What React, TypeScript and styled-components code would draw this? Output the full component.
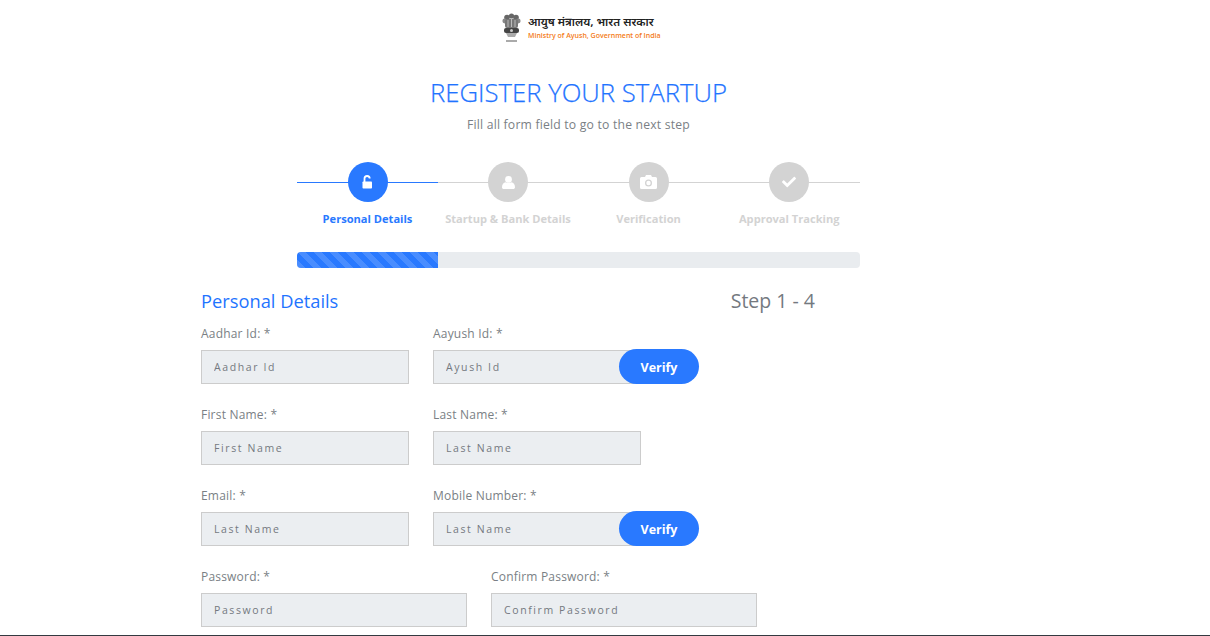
import React from "react";
import styled, { createGlobalStyle } from "styled-components";
import { FaCheck } from "react-icons/fa";

const Global = createGlobalStyle`
  html, body { margin: 0; padding: 0; background: #fff; height: 636px; overflow: hidden; }
  body { font-family: "Open Sans", "Noto Sans", sans-serif; }
  * { box-sizing: border-box; }
`;

const Page = styled.div`
  height: 636px;
  overflow: hidden;
  border-bottom: 1px solid #343a40;
  display: flex;
  flex-direction: column;
`;

const Brand = styled.header`
  height: 48px;
  padding: 13px 0 0 502px;
  display: flex;
  gap: 7px;
`;

const BrandText = styled.div`
  display: flex;
  flex-direction: column;
  padding-top: 4px;
`;

const BrandHindi = styled.span`
  font-family: "Noto Sans Devanagari", "Noto Sans", sans-serif;
  font-size: 11.5px;
  line-height: 14px;
  font-weight: 600;
  color: #222;
  white-space: nowrap;
`;

const BrandEnglish = styled.span`
  font-size: 7px;
  line-height: 10px;
  font-weight: 600;
  color: #f47b20;
  white-space: nowrap;
`;

const Title = styled.h1`
  margin: 28px 0 0;
  width: 1157px;
  text-align: center;
  font-size: 25.7px;
  line-height: 34px;
  font-weight: 300;
  color: #1f74ff;
  -webkit-text-stroke: 0.25px #1f74ff;
`;

const Subtitle = styled.p`
  margin: 6px 0 0;
  width: 1157px;
  text-align: center;
  font-size: 12.2px;
  line-height: 18px;
  color: #7a7f85;
  letter-spacing: 0.2px;
`;

const Steps = styled.ol`
  list-style: none;
  margin: 28px 0 0 297px;
  padding: 0;
  width: 563px;
  display: grid;
  grid-template-columns: 141px 140px 141px 140.5px;
`;

const StepItem = styled.li<{ $active?: boolean }>`
  position: relative;
  display: flex;
  flex-direction: column;
  align-items: center;
  color: ${(p) => (p.$active ? "#2979ff" : "#d3d3d3")};
  &::before {
    content: "";
    position: absolute;
    left: 0;
    right: 0;
    top: 20px;
    height: 1px;
    background: ${(p) => (p.$active ? "#2979ff" : "#d3d3d3")};
  }
`;

const StepCircle = styled.span<{ $active?: boolean }>`
  position: relative;
  width: 40px;
  height: 40px;
  border-radius: 50%;
  display: flex;
  align-items: center;
  justify-content: center;
  color: #fff;
  font-size: 14px;
  background: ${(p) => (p.$active ? "#2979ff" : "#d3d3d3")};
`;

const StepLabel = styled.span`
  margin-top: 8px;
  font-size: 11.1px;
  line-height: 18px;
  font-weight: 700;
  white-space: nowrap;
`;

const Progress = styled.div`
  margin: 24px 0 0 297px;
  width: 563px;
  height: 16px;
  border-radius: 4px;
  overflow: hidden;
  background: #e9ecef;
`;

const ProgressBar = styled.div`
  height: 100%;
  background-color: #2979ff;
  background-image: linear-gradient(
    45deg,
    rgba(255, 255, 255, 0.15) 25%,
    transparent 25%,
    transparent 50%,
    rgba(255, 255, 255, 0.15) 50%,
    rgba(255, 255, 255, 0.15) 75%,
    transparent 75%,
    transparent
  );
  background-size: 16px 16px;
`;

const Form = styled.form`
  padding: 19px 0 0 201px;
  display: flex;
  flex-direction: column;
`;

const SectionHead = styled.div`
  width: 614px;
  display: flex;
  justify-content: space-between;
  align-items: center;
  height: 28px;
`;

const SectionTitle = styled.h2`
  margin: 0;
  font-size: 18.3px;
  line-height: 28px;
  font-weight: 400;
  color: #1f74ff;
`;

const StepCount = styled.span`
  font-size: 19.5px;
  line-height: 28px;
  color: #74797f;
`;

const Row = styled.div`
  display: flex;
  gap: 24px;
  margin-top: 10px;
  & + & { margin-top: 22px; }
`;

const Field = styled.label<{ $wide?: boolean }>`
  position: relative;
  display: flex;
  flex-direction: column;
  width: ${(p) => (p.$wide ? "266px" : "208px")};
`;

const LabelText = styled.span`
  height: 25px;
  font-size: 12px;
  line-height: 18px;
  color: #7a7f85;
  letter-spacing: 0.2px;
`;

const Input = styled.input`
  height: 34px;
  width: 100%;
  padding: 0 12px 1px;
  background: #ebeef1;
  border: 1px solid #ccc;
  border-radius: 0;
  outline: none;
  font-family: inherit;
  font-size: 10.5px;
  letter-spacing: 1.6px;
  &::placeholder { color: #74797f; opacity: 1; }
`;

const VerifyButton = styled.button`
  position: absolute;
  left: 186px;
  top: 24px;
  width: 80px;
  height: 35px;
  padding: 2px 0 0;
  border: 0;
  border-radius: 18px;
  background: #2979ff;
  color: #fff;
  font-family: inherit;
  font-size: 12.5px;
  font-weight: 700;
`;

const Emblem = () => (
  <svg width="19" height="31" viewBox="0 0 19 31" aria-hidden="true">
    <g fill="#666">
      <circle cx="9.5" cy="3" r="2.6" />
      <circle cx="5" cy="4.6" r="2.8" />
      <circle cx="14" cy="4.6" r="2.8" />
      <circle cx="2.8" cy="8" r="2.4" fill="#888" />
      <circle cx="16.2" cy="8" r="2.4" fill="#888" />
      <rect x="3" y="6" width="13" height="9" rx="2" fill="#777" />
      <path d="M6 7v7M9.5 6v8M13 7v7" stroke="#bbb" strokeWidth="1" fill="none" />
      <rect x="2" y="15" width="15" height="5" rx="2" fill="#444" />
      <circle cx="9.5" cy="17.5" r="1.5" fill="#ccc" />
      <path d="M4 20h11l-2 4H6z" fill="#aaa" />
      <rect x="4" y="27" width="11" height="2" fill="#aaa" />
    </g>
  </svg>
);

const LockIcon = () => (
  <svg width="11" height="14" viewBox="0 0 11 14" aria-hidden="true">
    <rect x="0.5" y="6.5" width="9.5" height="7" rx="0.8" fill="currentColor" />
    <path d="M2.5 7V3.6a2.6 2.6 0 0 1 5.2 0" fill="none" stroke="currentColor" strokeWidth="1.8" />
  </svg>
);

const UserIcon = () => (
  <svg width="13" height="13" viewBox="0 0 13 13" aria-hidden="true">
    <circle cx="6.5" cy="3.4" r="3.4" fill="currentColor" />
    <path d="M0 11.2C0 8.4 1.6 6.6 3.6 6.2c1.7 1.2 4.1 1.2 5.8 0C11.4 6.6 13 8.4 13 11.2 13 12.3 12.2 13 11.2 13H1.8C.8 13 0 12.3 0 11.2z" fill="currentColor" />
  </svg>
);

const CameraIcon = () => (
  <svg width="17" height="14" viewBox="0 0 17 14" aria-hidden="true">
    <path
      fillRule="evenodd"
      fill="currentColor"
      d="M1.5 2H5l1-2h5l1 2h3.5A1.5 1.5 0 0 1 17 3.5v9a1.5 1.5 0 0 1-1.5 1.5h-14A1.5 1.5 0 0 1 0 12.500v-9A1.500 1.500 0 0 1 1.500 2zM8.500 4.500a3.500 3.500 0 1 0 0 7 3.500 3.500 0 0 0 0-7zM8.500 5.800a2.200 2.200 0 1 1 0 4.400 2.200 2.200 0 0 1 0-4.400z"
    />
  </svg>
);

const rows = [
  [
    { label: "Aadhar Id: *", ph: "Aadhar Id" },
    { label: "Aayush Id: *", ph: "Ayush Id", verify: true },
  ],
  [
    { label: "First Name: *", ph: "First Name" },
    { label: "Last Name: *", ph: "Last Name" },
  ],
  [
    { label: "Email: *", ph: "Last Name" },
    { label: "Mobile Number: *", ph: "Last Name", verify: true },
  ],
];

const steps = [
  { label: "Personal Details", icon: <LockIcon />, active: true },
  { label: "Startup & Bank Details", icon: <UserIcon /> },
  { label: "Verification", icon: <CameraIcon /> },
  { label: "Approval Tracking", icon: <FaCheck /> },
];

export default function App() {
  return (
    <Page>
      <Global />
      <Brand>
        <Emblem />
        <BrandText>
          <BrandHindi>आयुष मंत्रालय, भारत सरकार</BrandHindi>
          <BrandEnglish>Ministry of Ayush, Government of India</BrandEnglish>
        </BrandText>
      </Brand>
      <Title>REGISTER YOUR STARTUP</Title>
      <Subtitle>Fill all form field to go to the next step</Subtitle>
      <Steps>
        {steps.map((s) => (
          <StepItem key={s.label} $active={s.active}>
            <StepCircle $active={s.active}>{s.icon}</StepCircle>
            <StepLabel>{s.label}</StepLabel>
          </StepItem>
        ))}
      </Steps>
      <Progress>
        <ProgressBar style={{ width: "25%" }} />
      </Progress>
      <Form>
        <SectionHead>
          <SectionTitle>Personal Details</SectionTitle>
          <StepCount>Step 1 - 4</StepCount>
        </SectionHead>
        {rows.map((r, i) => (
          <Row key={i}>
            {r.map((f) => (
              <Field key={f.label}>
                <LabelText>{f.label}</LabelText>
                <Input placeholder={f.ph} />
                {f.verify && <VerifyButton type="button">Verify</VerifyButton>}
              </Field>
            ))}
          </Row>
        ))}
        <Row>
          <Field $wide>
            <LabelText>Password: *</LabelText>
            <Input placeholder="Password" />
          </Field>
          <Field $wide>
            <LabelText>Confirm Password: *</LabelText>
            <Input placeholder="Confirm Password" />
          </Field>
        </Row>
      </Form>
    </Page>
  );
}
